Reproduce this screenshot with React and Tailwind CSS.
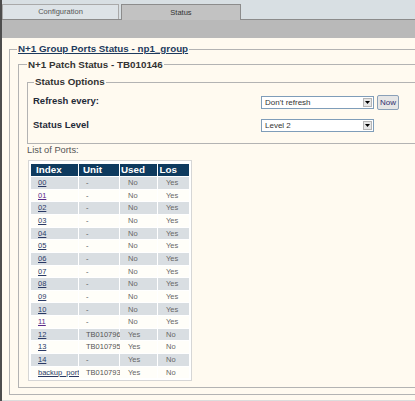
import React from 'react';

const ports = [
  { index: '00', unit: '-', used: 'No', los: 'Yes' },
  { index: '01', unit: '-', used: 'No', los: 'Yes', visited: true },
  { index: '02', unit: '-', used: 'No', los: 'Yes' },
  { index: '03', unit: '-', used: 'No', los: 'Yes' },
  { index: '04', unit: '-', used: 'No', los: 'Yes' },
  { index: '05', unit: '-', used: 'No', los: 'Yes' },
  { index: '06', unit: '-', used: 'No', los: 'Yes' },
  { index: '07', unit: '-', used: 'No', los: 'Yes' },
  { index: '08', unit: '-', used: 'No', los: 'Yes' },
  { index: '09', unit: '-', used: 'No', los: 'Yes' },
  { index: '10', unit: '-', used: 'No', los: 'Yes' },
  { index: '11', unit: '-', used: 'No', los: 'Yes', visited: true },
  { index: '12', unit: 'TB010796', used: 'Yes', los: 'No' },
  { index: '13', unit: 'TB010795', used: 'Yes', los: 'No' },
  { index: '14', unit: '-', used: 'Yes', los: 'No' },
  { index: 'backup_port', unit: 'TB010793', used: 'Yes', los: 'No' },
];

function FakeSelect({ value }) {
  return (
    <div className="flex h-[13px] w-[113px] items-center border border-[#7f9db9] bg-white pl-[3px] text-[8px] leading-none text-[#333]">
      <span>{value}</span>
      <span className="ml-auto mr-[1px] flex h-[9px] w-[9px] items-center justify-center border border-[#b5b5b5] bg-[#e6e6e6]">
        <svg width="5" height="3" viewBox="0 0 5 3">
          <path d="M0 0h5L2.5 3z" fill="#000" />
        </svg>
      </span>
    </div>
  );
}

export default function App() {
  return (
    <div className="flex h-[401px] w-[415px] flex-col overflow-hidden border-l-2 border-[#4d4d4d] bg-[#fffaf0] font-['Liberation_Sans',Arial,sans-serif]">
      {/* tabs */}
      <div className="flex h-[19px] shrink-0 items-end gap-[2px] bg-[#d8dfe3]">
        <div className="flex h-[15px] w-[117px] items-center justify-center border border-b-0 border-[#a9a9a9] bg-[#dde3e7] text-[7.5px] text-[#555]">
          Configuration
        </div>
        <div className="relative z-10 -mb-px flex h-[16px] w-[120px] items-center justify-center border border-b-0 border-[#8c8c8c] bg-[#c2c2c2] text-[7.5px] text-[#333]">
          Status
        </div>
      </div>
      <div className="h-[19px] shrink-0 border-t border-[#8b8b8b] bg-[#b9b9b9]" />

      <div className="flex-1 border-b border-[#dcdcdc]">
        <fieldset className="ml-[7px] mt-[5px] w-[440px] border border-[#b3b3b3] pb-[6px] pl-[8px] pt-[3.5px]">
          <legend className="-ml-px px-px text-[9.8px] font-bold leading-[12px] text-[#1d3a5e] underline">
            N+1 Group Ports Status - np1_group
          </legend>

          <fieldset className="border border-[#b3b3b3] pb-[6px] pl-[8px] pt-[5.5px]">
            <legend className="px-px text-[9.8px] font-bold leading-[12px] text-[#333]">
              N+1 Patch Status - TB010146
            </legend>

            <fieldset className="border border-[#b3b3b3] pb-[11px] pl-[5px] pt-[7px]">
              <legend className="ml-px px-px text-[9.8px] font-bold leading-[12px] text-[#333]">
                Status Options
              </legend>
              <div className="flex h-[15px] items-start">
                <div className="w-[228px] text-[9.5px] font-bold leading-[12px] text-[#1f2a38]">Refresh every:</div>
                <div className="mt-px">
                  <FakeSelect value="Don't refresh" />
                </div>
                <button className="ml-[3px] h-[15px] w-[22px] rounded-[2px] border border-[#8aa0b8] bg-[#e6e6e6] text-[8px] leading-none text-[#2e2e6e]">
                  Now
                </button>
              </div>
              <div className="mt-[9px] flex items-start">
                <div className="w-[228px] text-[9.5px] font-bold leading-[12px] text-[#1f2a38]">Status Level</div>
                <FakeSelect value="Level 2" />
              </div>
            </fieldset>

            <div className="mt-px text-[9.3px] leading-[11px] text-[#555]">List of Ports:</div>
            <div className="ml-px inline-block border border-[#d6d6d6] bg-white px-[2px] pb-[2px] pt-[3px]">
              <div className="grid grid-cols-[47px_40px_37px_31px] grid-rows-[12.3px] auto-rows-[11.65px] gap-px text-[7.5px] leading-none">
                <div className="flex items-center bg-[#0e3a5e] pl-[5px] text-[9.8px] font-bold text-white">Index</div>
                <div className="flex items-center bg-[#0e3a5e] pl-[4px] text-[9.8px] font-bold text-white">Unit</div>
                <div className="flex items-center bg-[#0e3a5e] pl-px text-[9.8px] font-bold text-white">Used</div>
                <div className="flex items-center bg-[#0e3a5e] pl-[1.5px] text-[9.8px] font-bold text-white">Los</div>
                {ports.map((p, i) => {
                  const bg = i % 2 === 0 ? 'bg-[#d9dee2]' : 'bg-[#fffef9]';
                  return (
                    <React.Fragment key={p.index}>
                      <div className={`flex items-center pl-[7px] ${bg}`}>
                        <span className={p.visited ? 'text-[#5a2a8a] underline' : 'text-[#2a3a66] underline'}>{p.index}</span>
                      </div>
                      <div className={`flex items-center pl-[7px] text-[#555] ${bg}`}>{p.unit}</div>
                      <div className={`flex items-center pl-[8px] text-[#666] ${bg}`}>{p.used}</div>
                      <div className={`flex items-center pl-[8px] text-[#666] ${bg}`}>{p.los}</div>
                    </React.Fragment>
                  );
                })}
              </div>
            </div>
          </fieldset>
        </fieldset>
      </div>
    </div>
  );
}
